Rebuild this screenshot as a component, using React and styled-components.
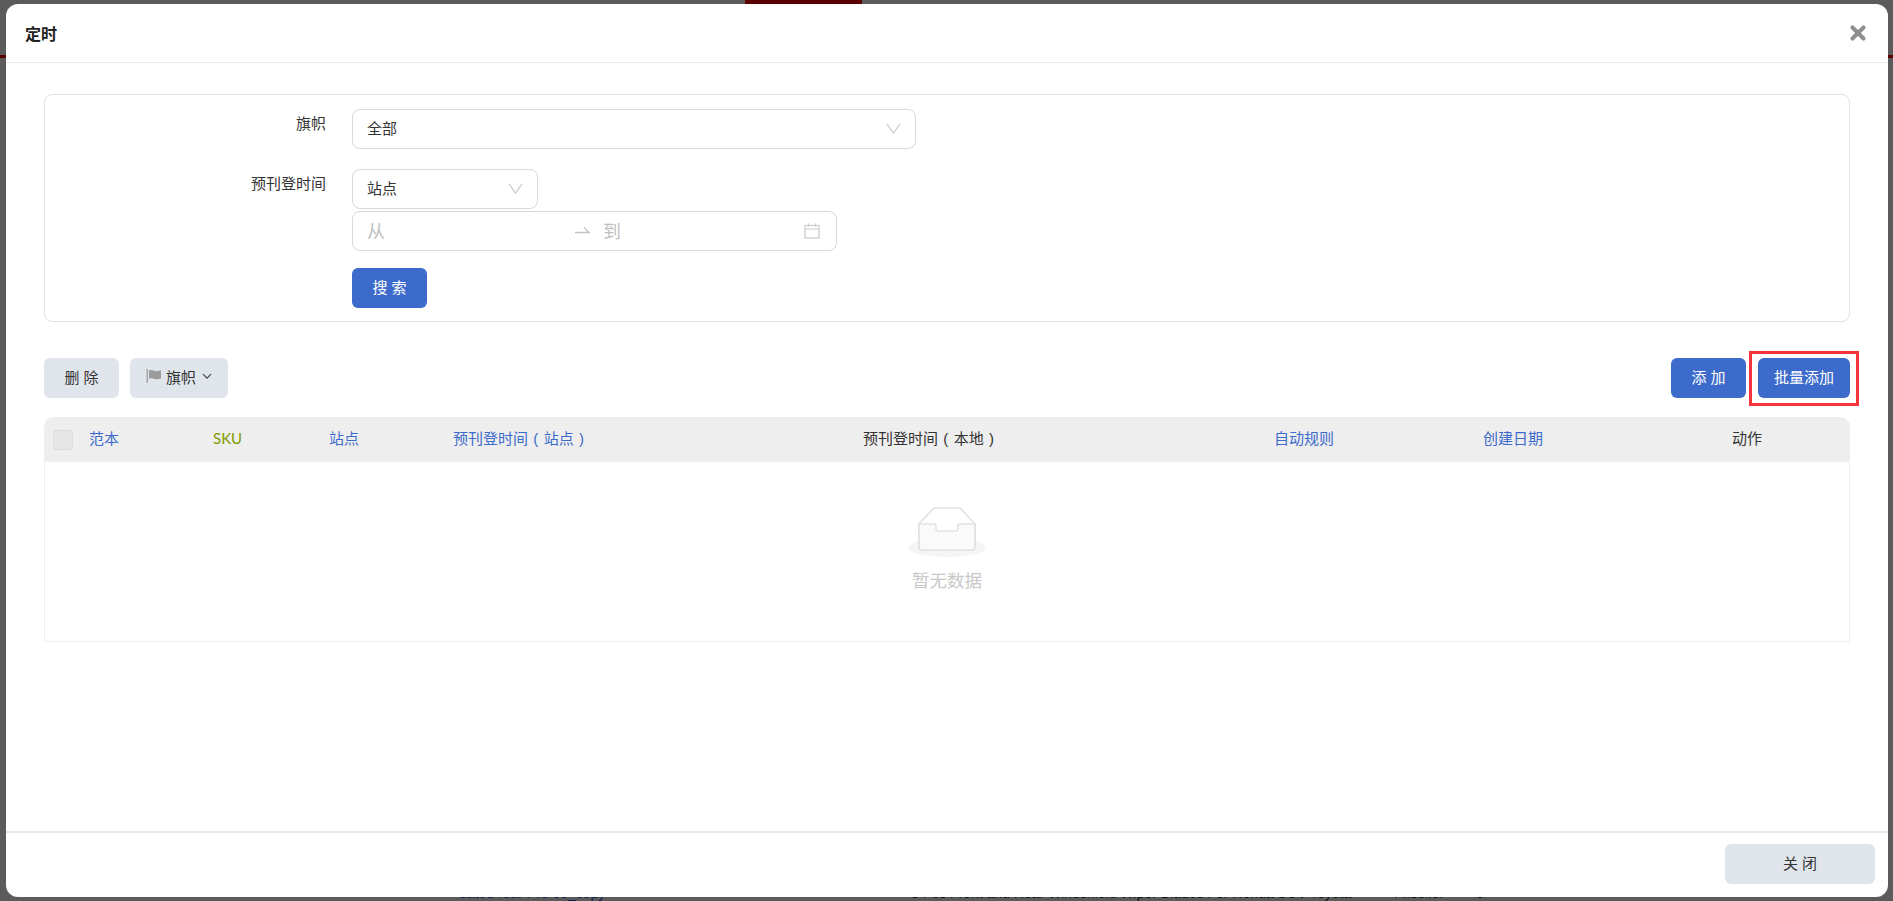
import React from "react";
import styled, { createGlobalStyle } from "styled-components";
import { X } from "lucide-react";

const Global = createGlobalStyle`
html, body { margin: 0; padding: 0; height: 100%; overflow: hidden; }
body { font-family: "Liberation Sans", "Noto Sans CJK SC", sans-serif; font-size: 15px; color: #333; }
* { box-sizing: border-box; }
`;

const Backdrop = styled.div`
position: relative;
width: 1893px;
height: 901px;
background: #5b5b5b;
overflow: hidden;
padding: 4px 5px 4px 6px;
`;
const TopTab = styled.div`
position: absolute;
left: 745px;
top: 0;
width: 117px;
height: 4px;
background: #5a0000;
`;
const SideLine = styled.div`
position: absolute;
top: 55px;
height: 3px;
width: 6px;
background: #5a0000;
${props => props.$right ? "right: 0;" : "left: 0;"}
`;
const PeekRow = styled.div`
position: absolute;
left: 459px;
top: 885px;
display: flex;
font-size: 14px;
line-height: 17px;
white-space: nowrap;
`;
const PeekCell = styled.div`
width: ${props => props.$width}px;
flex: none;
color: ${props => props.$color || "#111"};
`;
const Modal = styled.div`
position: relative;
height: 893px;
background: #fff;
border-radius: 12px;
display: flex;
flex-direction: column;
`;
const Header = styled.div`
height: 59px;
flex: none;
padding: 0 19px;
border-bottom: 1px solid #e8e8e8;
display: flex;
align-items: center;
justify-content: space-between;
`;
const ModalTitle = styled.div`
font-size: 16px;
font-weight: 700;
color: #222;
`;
const CloseIcon = styled(X)`
color: #8f8f8f;
`;
const Body = styled.div`
flex: 1;
padding: 31px 38px 0;
`;
const Panel = styled.div`
height: 228px;
border: 1px solid #e2e2e2;
border-radius: 8px;
padding: 14px 0 0;
`;
const FormRow = styled.div`
display: flex;
margin-bottom: ${props => props.$gap ?? 20}px;
`;
const Label = styled.div`
width: 281px;
margin-right: 26px;
flex: none;
text-align: right;
line-height: 30px;
color: #333;
`;
const Stack = styled.div`
display: flex;
flex-direction: column;
gap: 2px;
`;
const Field = styled.div`
width: ${props => props.$width}px;
height: 40px;
padding: 0 14px 3px;
border: 1px solid #d9d9d9;
border-radius: 8px;
display: flex;
align-items: center;
justify-content: space-between;
background: #fff;
`;
const Muted = styled.span`
font-size: 18px;
color: #bfbfbf;
`;
const DateStart = styled.div`
width: 208px;
flex: none;
`;
const DateEnd = styled.div`
display: flex;
align-items: center;
gap: 13px;
flex: 1;
`;
const CalendarIcon = styled.svg`
margin: 2px 2px 0 0;
`;
const Button = styled.button`
width: ${props => props.$width}px;
height: 40px;
flex: none;
padding: 0 0 4px;
border: 0;
border-radius: 6px;
font: inherit;
display: flex;
align-items: center;
justify-content: center;
gap: 3px;
color: ${props => props.$primary ? "#fff" : "#333"};
background: ${props => props.$primary ? "#3d6bcb" : "#e0e5ec"};
`;
const SearchButton = styled(Button)`
margin-top: 15px;
`;
const Toolbar = styled.div`
display: flex;
align-items: center;
justify-content: space-between;
margin: 36px 0 19px;
`;
const ButtonGroup = styled.div`
display: flex;
gap: ${props => props.$gap}px;
`;
const Highlight = styled.div`
position: relative;
&::after {
  content: "";
  position: absolute;
  inset: -7px -9px -8px -9px;
  border: 3px solid #f5333a;
  pointer-events: none;
}
`;
const Table = styled.div`
border: 1px solid #efefef;
border-top: 0;
border-radius: 10px 10px 0 0;
height: 225px;
`;
const HeadRow = styled.div`
height: 45px;
margin: 0 -1px;
background: #eeeeee;
border-radius: 10px 10px 0 0;
display: grid;
grid-template-columns: 169px 116px 124px 410px 411px 209px 249px 1fr;
align-items: center;
`;
const HeadCell = styled.div`
padding-bottom: 4px;
word-spacing: 1.2px;
font-family: ${props => props.$latin ? '"Lato", sans-serif' : "inherit"};
color: ${props => props.$color || "#333"};
white-space: nowrap;
display: flex;
align-items: center;
`;
const Checkbox = styled.span`
width: 20px;
height: 20px;
margin: 4px 16px 0 9px;
background: #e6e6e6;
border: 1px solid #dcdcdc;
border-radius: 3px;
`;
const Empty = styled.div`
display: flex;
flex-direction: column;
align-items: center;
padding-top: 45px;
`;
const EmptyText = styled.div`
margin-top: 10px;
font-size: 17.5px;
color: #c8c8c8;
`;
const Footer = styled.div`
height: 66px;
flex: none;
border-top: 2px solid #e8e8e8;
padding: 11px 13px 0 0;
display: flex;
justify-content: flex-end;
`;
const FlagChevron = styled.svg`
margin-left: 3px;
`;
const FieldChevron = styled.svg`
margin-top: 2px;
`;

const Chevron = ({ size = 15 }) => (
  <FieldChevron width={size} height={size} viewBox="0 0 15 15" fill="none" stroke="#c4c4c4" strokeWidth="1.1">
    <path d="M1 3l6.500 9L14 3" />
  </FieldChevron>
);

const Calendar = () => (
  <CalendarIcon width="16" height="16" viewBox="0 0 16 16" fill="none" stroke="#c9c9c9" strokeWidth="1.2">
    <rect x="1" y="2.500" width="14" height="12.500" />
    <path d="M1 6h14M4.500 0.500v3M11.500 0.500v3" />
  </CalendarIcon>
);

const DateArrow = () => (
  <svg width="15" height="8" viewBox="0 0 15 8" fill="none" stroke="#c4c4c4" strokeWidth="1.3">
    <path d="M0 6.500h14L9 1.500" />
  </svg>
);

const Flag = () => (
  <svg width="17" height="14" viewBox="0 0 17 14">
    <path d="M0.500 0h1.500v14H0.500z" fill="#a5a5a5" />
    <path d="M3 1.500c3-1.200 5 .8 7 .6 2-.1 3.500-.6 5-.6v8c-2 .3-3.200 .8-5 .7-2-.1-4-1.600-7-.5z" fill="#9b9b9b" />
  </svg>
);

const SmallChevron = () => (
  <FlagChevron width="10" height="7" viewBox="0 0 10 7" fill="none" stroke="#444" strokeWidth="1.2">
    <path d="M1 1.200l4 4 4-4" />
  </FlagChevron>
);

const Inbox = () => (
  <svg width="78" height="50" viewBox="0 0 78 50">
    <ellipse cx="39" cy="40.500" rx="39" ry="9.500" fill="#f5f5f5" />
    <path d="M11 17L26 1h26l15 16v23a3 3 0 0 1-3 3H14a3 3 0 0 1-3-3z" fill="#fff" stroke="#e2e2e2" strokeWidth="1.6" />
    <path d="M11 19a2 2 0 0 1 2-2h13c1.500 0 2 .8 2 2v2.500c0 1.300 .8 2.500 2.500 2.500h17c1.700 0 2.500-1.200 2.500-2.500V19c0-1.200 .5-2 2-2h13a2 2 0 0 1 2 2v21a3 3 0 0 1-3 3H14a3 3 0 0 1-3-3z" fill="#fafafa" stroke="#e2e2e2" strokeWidth="1.6" />
  </svg>
);

const App = () => {
  return (
    <Backdrop>
      <Global />
      <TopTab />
      <SideLine />
      <SideLine $right />
      <PeekRow>
        <PeekCell $width={452} $color="#0c1c50">dated rear Pro 00_copy</PeekCell>
        <PeekCell $width={484}>3 Pcs Front and Rear Windshield Wiper Blades For Honda SUV Toyota</PeekCell>
        <PeekCell $width={81}>Aliseller</PeekCell>
        <PeekCell $width={75}>0</PeekCell>
      </PeekRow>
      <Modal>
        <Header>
          <ModalTitle>定时</ModalTitle>
          <CloseIcon size={22} strokeWidth={4.5} />
        </Header>
        <Body>
          <Panel>
            <FormRow>
              <Label>旗帜</Label>
              <Field $width={564}>
                全部
                <Chevron />
              </Field>
            </FormRow>
            <FormRow $gap={0}>
              <Label>预刊登时间</Label>
              <Stack>
                <Field $width={186}>
                  站点
                  <Chevron />
                </Field>
                <Field $width={485}>
                  <DateStart>
                    <Muted>从</Muted>
                  </DateStart>
                  <DateEnd>
                    <DateArrow />
                    <Muted>到</Muted>
                  </DateEnd>
                  <Calendar />
                </Field>
                <SearchButton $primary $width={75}>搜 索</SearchButton>
              </Stack>
            </FormRow>
          </Panel>
          <Toolbar>
            <ButtonGroup $gap={11}>
              <Button $width={75}>删 除</Button>
              <Button $width={98}>
                <Flag />
                旗帜
                <SmallChevron />
              </Button>
            </ButtonGroup>
            <ButtonGroup $gap={12}>
              <Button $primary $width={75}>添 加</Button>
              <Highlight>
                <Button $primary $width={92}>批量添加</Button>
              </Highlight>
            </ButtonGroup>
          </Toolbar>
          <Table>
            <HeadRow>
              <HeadCell $color="#3d6bcb">
                <Checkbox />
                范本
              </HeadCell>
              <HeadCell $color="#7f9a00" $latin>SKU</HeadCell>
              <HeadCell $color="#3d6bcb">站点</HeadCell>
              <HeadCell $color="#3d6bcb">预刊登时间 ( 站点 )</HeadCell>
              <HeadCell>预刊登时间 ( 本地 )</HeadCell>
              <HeadCell $color="#3d6bcb">自动规则</HeadCell>
              <HeadCell $color="#3d6bcb">创建日期</HeadCell>
              <HeadCell>动作</HeadCell>
            </HeadRow>
            <Empty>
              <Inbox />
              <EmptyText>暂无数据</EmptyText>
            </Empty>
          </Table>
        </Body>
        <Footer>
          <Button $width={150}>关 闭</Button>
        </Footer>
      </Modal>
    </Backdrop>
  );
};

export default App;
